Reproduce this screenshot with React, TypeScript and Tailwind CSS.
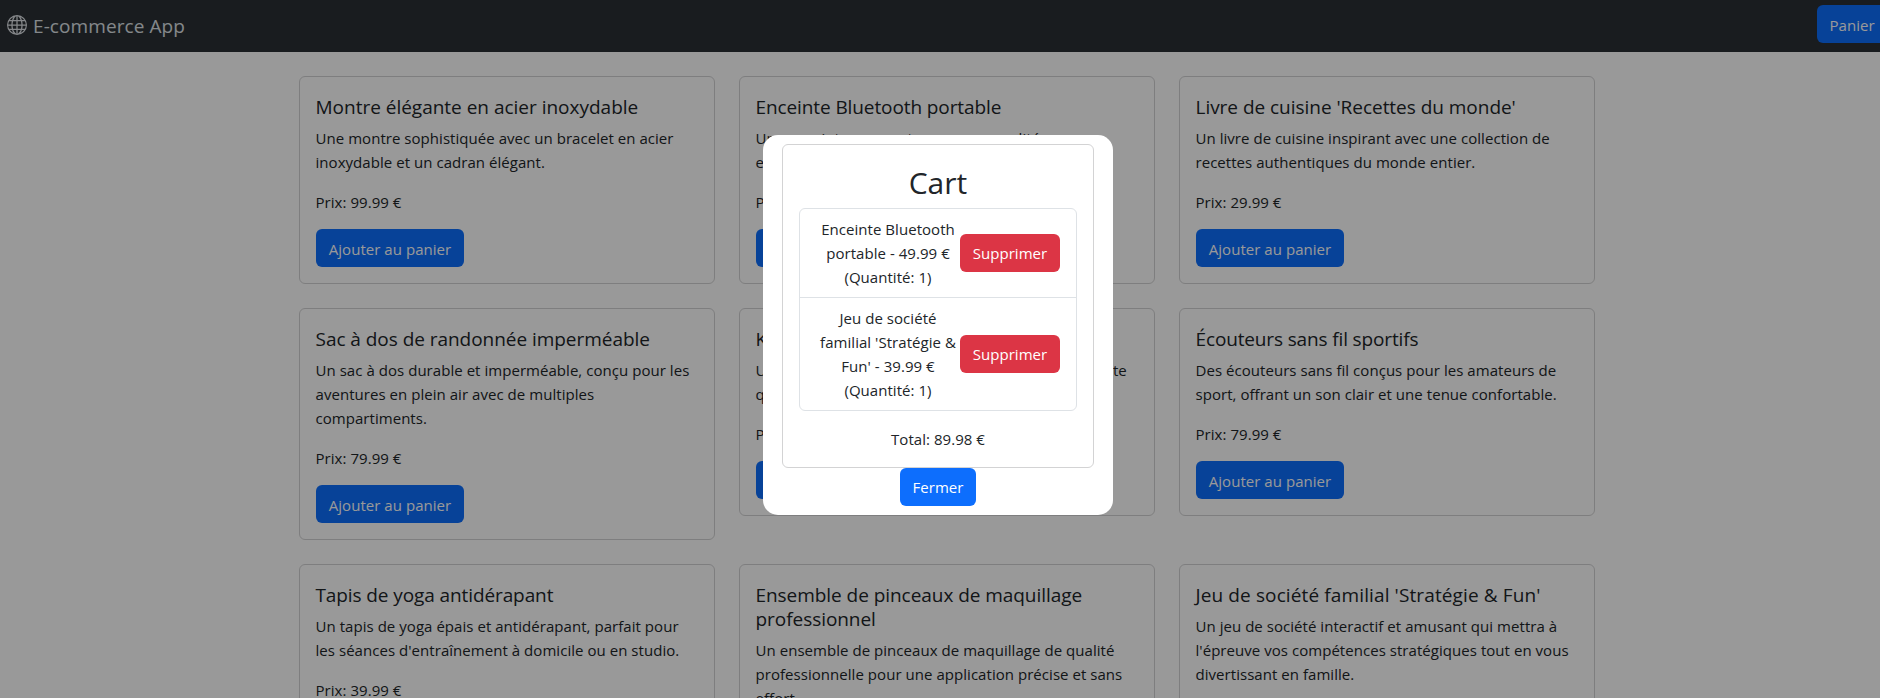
import React from "react";
import { BsGlobe } from "react-icons/bs";

type Product = { title: string; lines: string[]; price: string; tracking?: string };

const products: Product[] = [
  {
    title: "Montre élégante en acier inoxydable",
    lines: ["Une montre sophistiquée avec un bracelet en acier", "inoxydable et un cadran élégant."],
    price: "99.99",
    tracking: "tracking-[-0.01px]",
  },
  {
    title: "Enceinte Bluetooth portable",
    lines: ["Une enceinte compacte avec une qualité", "exceptionnelle et une autonomie de longue durée."],
    price: "49.99",
  },
  {
    title: "Livre de cuisine 'Recettes du monde'",
    lines: ["Un livre de cuisine inspirant avec une collection de", "recettes authentiques du monde entier."],
    price: "29.99",
    tracking: "tracking-[-0.03px]",
  },
  {
    title: "Sac à dos de randonnée imperméable",
    lines: ["Un sac à dos durable et imperméable, conçu pour les", "aventures en plein air avec de multiples", "compartiments."],
    price: "79.99",
    tracking: "tracking-[-0.04px]",
  },
  {
    title: "Kit de couteaux de cuisine",
    lines: ["Un ensemble de couteaux de cuisine en acier - haute", "qualité pour les chefs."],
    price: "89.99",
  },
  {
    title: "Écouteurs sans fil sportifs",
    lines: ["Des écouteurs sans fil conçus pour les amateurs de", "sport, offrant un son clair et une tenue confortable."],
    price: "79.99",
    tracking: "tracking-[-0.14px]",
  },
  {
    title: "Tapis de yoga antidérapant",
    lines: ["Un tapis de yoga épais et antidérapant, parfait pour", "les séances d'entraînement à domicile ou en studio."],
    price: "39.99",
  },
  {
    title: "Ensemble de pinceaux de maquillage professionnel",
    lines: ["Un ensemble de pinceaux de maquillage de qualité", "professionnelle pour une application précise et sans", "effort."],
    price: "34.99",
    tracking: "tracking-[-0.05px]",
  },
  {
    title: "Jeu de société familial 'Stratégie & Fun'",
    lines: ["Un jeu de société interactif et amusant qui mettra à", "l'épreuve vos compétences stratégiques tout en vous", "divertissant en famille."],
    price: "39.99",
    tracking: "tracking-[0.12px]",
  },
];

const cart = [
  { lines: ["Enceinte Bluetooth", "portable - 49.99 €", "(Quantité: 1)"] },
  { lines: ["Jeu de société", "familial 'Stratégie &", "Fun' - 39.99 €", "(Quantité: 1)"] },
];

function Lines({ lines }: { lines: string[] }) {
  return (
    <>
      {lines.map((line) => (
        <span key={line} className="block whitespace-nowrap">
          {line}
        </span>
      ))}
    </>
  );
}

function ProductCard({ product }: { product: Product }) {
  return (
    <article className="rounded-md border border-[#d3d3d4] px-4 pt-[18px] pb-4">
      <h5 className={`-ml-[0.5px] mb-[7px] text-[19px] leading-6 ${product.tracking ?? "tracking-[-0.1px]"}`}>{product.title}</h5>
      <p className="-ml-[0.5px] mb-4">
        <Lines lines={product.lines} />
      </p>
      <p className="-ml-[0.5px] mb-[15px]">Prix: {product.price} €</p>
      <button className="h-[38px] w-[148px] rounded-md bg-[#0d6efd] pt-px text-white">Ajouter au panier</button>
    </article>
  );
}

function CartDialog() {
  return (
    <div className="fixed top-[135px] left-[763px] flex h-[380px] w-[350px] flex-col items-center rounded-[15px] bg-white px-[19px] py-[9px] text-center">
      <section className="h-[324px] w-full rounded-md border border-[#d3d3d4] px-4 pt-[19px]">
        <h2 className="mb-[5.6px] text-[30px] leading-[38.4px]">Cart</h2>
        <ul className="mb-4 divide-y divide-[#dee2e6] rounded-md border border-[#dee2e6]">
          {cart.map((item) => (
            <li key={item.lines[0]} className="flex items-center justify-between px-4 py-2">
              <div className="flex w-[144px] flex-col items-center">
                <Lines lines={item.lines} />
              </div>
              <button className="h-[38px] w-[100px] shrink-0 rounded-md bg-[#dc3545] text-white">Supprimer</button>
            </li>
          ))}
        </ul>
        <p>Total: 89.98 €</p>
      </section>
      <button className="h-[38px] w-[76px] rounded-md bg-[#0d6efd] text-white">Fermer</button>
    </div>
  );
}

export default function App() {
  return (
    <div className="h-[698px] w-full overflow-hidden bg-white font-['Open_Sans','Noto_Sans',sans-serif] text-[15px] leading-6 tracking-[0.045px] text-[#212529]">
      <div className="w-[1894px]">
        <nav className="flex h-[52px] items-center justify-between bg-[#2b3035] pl-[7px]">
          <div className="flex items-center gap-[6px] text-[19px] tracking-[0.09px] text-[#dee2e6]">
            <BsGlobe className="mb-[2px] size-5" />
            <span>E-commerce App</span>
          </div>
          <button className="mb-1 h-[38px] w-[77px] rounded-md bg-[#0d6efd] pt-px pl-[12.5px] text-left text-white">Panier</button>
        </nav>
        <main className="mx-auto mt-6 grid w-[1296px] grid-cols-3 items-start gap-6">
          {products.map((product) => (
            <ProductCard key={product.title} product={product} />
          ))}
        </main>
      </div>
      <div className="fixed inset-0 bg-black/40" />
      <CartDialog />
    </div>
  );
}
